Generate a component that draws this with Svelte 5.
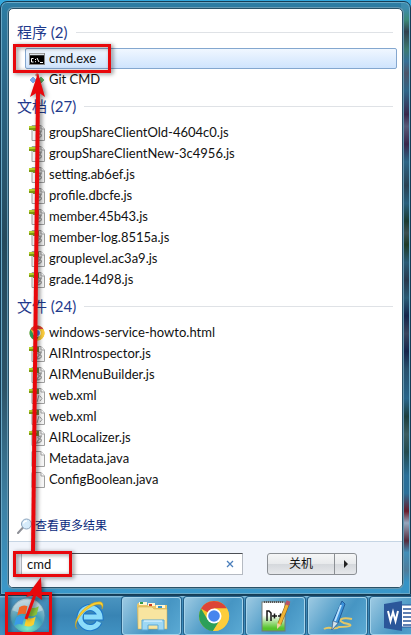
<script>
  const groups = [
    {
      title: '程序',
      count: 2,
      items: [
        { name: 'cmd.exe', icon: 'cmd' },
        { name: 'Git CMD', icon: 'git' },
      ],
    },
    {
      title: '文档',
      count: 27,
      items: [
        { name: 'groupShareClientOld-4604c0.js', icon: 'js' },
        { name: 'groupShareClientNew-3c4956.js', icon: 'js' },
        { name: 'setting.ab6ef.js', icon: 'js' },
        { name: 'profile.dbcfe.js', icon: 'js' },
        { name: 'member.45b43.js', icon: 'js' },
        { name: 'member-log.8515a.js', icon: 'js' },
        { name: 'grouplevel.ac3a9.js', icon: 'js' },
        { name: 'grade.14d98.js', icon: 'js' },
      ],
    },
    {
      title: '文件',
      count: 24,
      items: [
        { name: 'windows-service-howto.html', icon: 'chrome' },
        { name: 'AIRIntrospector.js', icon: 'js' },
        { name: 'AIRMenuBuilder.js', icon: 'js' },
        { name: 'web.xml', icon: 'xml' },
        { name: 'web.xml', icon: 'xml' },
        { name: 'AIRLocalizer.js', icon: 'js' },
        { name: 'Metadata.java', icon: 'file' },
        { name: 'ConfigBoolean.java', icon: 'file' },
      ],
    },
  ]

  const apps = [
    { id: 'explorer', label: 'Windows Explorer' },
    { id: 'chrome', label: 'Google Chrome' },
    { id: 'notepad', label: 'Notepad++' },
    { id: 'pen', label: 'Pen' },
    { id: 'word', label: 'Word' },
  ]

  let query = $state('cmd')
  let selected = $state(groups[0].items[0].name)
</script>

{#snippet chrome()}
  <circle cx="16" cy="16" r="15" fill="#f2c42c" />
  <path d="M16 16 L3 8.500 A15 15 0 0 1 29 8.500 L16 8.500 Z" fill="#dc4437" />
  <path d="M3 8.500 A15 15 0 0 0 15 31 L22 19.500 L9.500 19.500 Z" fill="#2c9f59" />
  <path d="M16 8.500 H29 A15 15 0 0 1 15 31 L22.500 19.800 Z" fill="#fccd3c" />
  <circle cx="16" cy="16" r="7.500" fill="#fff" />
  <circle cx="16" cy="16" r="5.800" fill="#4585ee" />
{/snippet}

{#snippet fileIcon(kind)}
  {#if kind === 'chrome'}
    <svg class="icon" viewBox="0 0 32 32">{@render chrome()}</svg>
  {:else}
    <svg class="icon" viewBox="0 0 16 16">
      {#if kind === 'cmd'}
        <rect x="0.500" y="2.500" width="15" height="11" fill="#000" stroke="#888" />
        <path d="M1 3.500 H15" stroke="#dce3e8" stroke-width="1.500" />
        <path d="M4.500 7.500 H2.500 V11 H4.500 M6.500 8 V9 M6.500 10.200 V11.200 M8 7 L10 11 M11 11.500 H14" fill="none" stroke="#fff" />
      {:else if kind === 'git'}
        <path d="M4 5 L7 8 L4 11 L1 8 Z" fill="#79a9ea" stroke="#79a9ea" stroke-linejoin="round" />
        <path d="M12 5 L15 8 L12 11 L9 8 Z" fill="#66bb6c" stroke="#66bb6c" stroke-linejoin="round" />
        <path d="M8 1 L10 3 L8 5 L6 3 Z" fill="#e8776b" />
        <path d="M8 11 L10 13 L8 15 L6 13 Z" fill="#efcf59" />
      {:else}
        <path d="M3 0.500 H12 L15.500 4 V15.500 H3 Z" fill="#f6f6f6" stroke="#a0a0a0" />
        <path d="M12 0.500 V4 H15.500" fill="#fff" stroke="#a0a0a0" />
        {#if kind === 'js'}
          <path d="M13 6 C8 6 8 8 11 9 C14 10 12 13 7 13 M12 7 L8 12" fill="none" stroke="#a2a2a2" stroke-width="1.300" />
        {:else if kind === 'xml'}
          <path d="M7 8 L5 10.500 L7 13 M11 8 L13 10.500 L11 13 M10 7 L8 14" fill="none" stroke="#999" />
        {/if}
        {#if kind !== 'file'}
          <rect x="4" y="1" width="6" height="5" fill="#7b8a44" />
          <rect x="0" y="1" width="8" height="4" fill="#7d9c12" />
          <rect x="0" y="1" width="8" height="2" fill="#b3cf2c" />
        {/if}
      {/if}
    </svg>
  {/if}
{/snippet}

<div class="desktop">
  <main class="menu">
    <div class="panel">
      <div class="results">
        {#each groups as group}
          <section>
            <h2>{group.title} ({group.count})</h2>
            <ul>
              {#each group.items as item}
                <li>
                  <button class="item" class:selected={item.name === selected} onclick={() => (selected = item.name)}>
                    {@render fileIcon(item.icon)}
                    <span>{item.name}</span>
                  </button>
                </li>
              {/each}
            </ul>
          </section>
        {/each}
        <a class="more" href="#more">
          <svg class="icon" viewBox="0 0 16 16">
            <path d="M1 15 L6 9.500" stroke="#8d8f96" stroke-width="2" stroke-linecap="round" />
            <circle cx="9.500" cy="6" r="5" fill="#d6ebfa" stroke="#8ba4bd" />
            <path d="M6.500 5.500 A3 3 0 0 1 10 3" fill="none" stroke="#fff" stroke-width="1.500" />
          </svg>
          查看更多结果
        </a>
      </div>

      <footer>
        <div class="search">
          <input aria-label="搜索程序和文件" bind:value={query} autocomplete="off" />
          <button class="clear" aria-label="清除" onclick={() => (query = '')}>
            <svg viewBox="0 0 8 8"><path d="M1 1 L7 7 M7 1 L1 7" stroke="#4a7ebb" stroke-width="1.300" /></svg>
          </button>
        </div>
        <div class="power">
          <button class="shutdown">关机</button>
          <button class="options" aria-label="关机选项">
            <svg viewBox="0 0 4 8"><path d="M0 0 L4 4 L0 8 Z" fill="#222" /></svg>
          </button>
        </div>
      </footer>
    </div>
  </main>

  <nav class="taskbar">
    <button class="start" aria-label="开始">
      <svg viewBox="0 0 36 36">
        <defs>
          <radialGradient id="orb" cx="0.500" cy="0.900" r="0.900">
            <stop offset="0" stop-color="#7df0c8" />
            <stop offset="0.500" stop-color="#3f9db8" />
            <stop offset="1" stop-color="#b6c9d2" />
          </radialGradient>
        </defs>
        <circle cx="18" cy="18" r="17" fill="url(#orb)" stroke="#4c8bad" />
        <path d="M3 13 A16 16 0 0 1 33 13 Q18 20 3 13 Z" fill="#fff" opacity="0.350" />
        <path d="M10 10 Q14 7 18 9 L16 17 Q12 15 8 18 Z" fill="#ef6628" />
        <path d="M20 10 Q24 12 29 9 L27 17 Q23 20 18 18 Z" fill="#8cc63e" />
        <path d="M7 20 Q11 17 15 19 L13 27 Q9 25 5 28 Z" fill="#3a9be8" />
        <path d="M17 20 Q22 22 26 19 L24 27 Q20 30 15 28 Z" fill="#fbd02e" />
      </svg>
    </button>
    <button class="ie" aria-label="Internet Explorer">
      <svg viewBox="0 0 32 32">
        <path d="M26 22 A10 10 0 1 1 27 17 H11" fill="none" stroke="#1c77c8" stroke-width="7" />
        <path d="M26 22 A10 10 0 1 1 27 17 H11" fill="none" stroke="#8bdcfa" stroke-width="5" />
        <path d="M4 29 C-3 21 15 0 28 2 C31 3 30 7 29 9 C30 3 24 3 16 8 C7 14 0 25 4 29 Z" fill="#f9cf32" stroke="#c99a18" stroke-width="0.500" />
      </svg>
    </button>
    {#each apps as app}
      <button class="app" aria-label={app.label}>
        <svg viewBox="0 0 32 32">
          {#if app.id === 'explorer'}
            <path d="M1 5 L2 3 H10 L11 5 H31 V29 H2 Z" fill="#e9c567" />
            <path d="M3 2 H11 V5 H3 Z M12 3 H19 V6 H12 Z M20 5 H29 V8 H20 Z" fill="#fff6d5" />
            <path d="M4 2 H7 V4 H4 Z" fill="#349b45" />
            <path d="M13 4 H16 V6 H13 Z" fill="#cd3c27" />
            <path d="M22 6 H26 V8 H22 Z" fill="#3296cd" />
            <path d="M2 7 H16 L18 9 H31 V29 H2 Z" fill="#f8e5a0" stroke="#cda84e" stroke-width="0.500" />
            <path d="M6 30 V20 H28 V30 H22 V25 H12 V30 Z" fill="#9ed8f4" stroke="#5aa8d6" />
            <path d="M8 21 H26" stroke="#eefaff" />
          {:else if app.id === 'chrome'}
            {@render chrome()}
          {:else if app.id === 'notepad'}
            <defs>
              <linearGradient id="page" x1="0" y1="0" x2="0" y2="1">
                <stop offset="0.450" stop-color="#fff" />
                <stop offset="0.900" stop-color="#56c32c" />
              </linearGradient>
            </defs>
            <rect x="2" y="2" width="23" height="29" fill="url(#page)" stroke="#747b74" />
            <path d="M4 2 H24" stroke="#555" stroke-width="2" stroke-dasharray="1 1" />
            <path d="M7 21 V11 H9 L11 13 V21 M12 16 H17 M14.500 13.500 V18.500 M18 16 H23 M20.500 13.500 V18.500" fill="none" stroke="#171717" stroke-width="1.500" />
            <path d="M28 3 L19 25" stroke="#8b6218" stroke-width="4" />
            <path d="M28 3 L19 25" stroke="#f1b434" stroke-width="3" />
            <path d="M17 23 L21 25 L17 29 Z" fill="#ecd1a2" />
            <path d="M28.500 1 L27 5" stroke="#bc5364" stroke-width="4" />
          {:else if app.id === 'pen'}
            <path d="M2 29 C8 25 11 31 17 27 C29 27 33 25 22 23 C14 20 20 17 30 19" fill="none" stroke="#e4c766" stroke-width="2" />
            <path d="M20 1 L23 4 L16 23 L10 30 L11 21 Z" fill="#3b91d9" stroke="#225b99" />
            <path d="M19 5 L13 21" stroke="#bce3ff" stroke-width="2" />
            <path d="M11 21 L16 23 L10 30 Z" fill="#d3e3ee" stroke="#536779" stroke-width="0.500" />
          {:else}
            <path d="M17 5 H31 V27 H17 Z" fill="#fff" stroke="#2b579a" />
            <path d="M19 9 H29 M19 13 H29 M19 17 H29 M19 21 H29 M19 25 H29" stroke="#2b579a" stroke-width="1.500" />
            <path d="M0 4 L18 1 V31 L0 28 Z" fill="#2b579a" />
            <path d="M4 11 L6.500 21 L9 12 L11.500 21 L14 11" fill="none" stroke="#fff" stroke-width="2" />
          {/if}
        </svg>
      </button>
    {/each}
  </nav>

  <svg class="marks" width="120" height="635" viewBox="0 0 120 635">
    <g class="shadow">
      <path d="M33 553 L38 92" stroke-width="4" />
      <path d="M38 73 L45 97 L38 92 L30 97 Z" class="head" />
      <path d="M26 619 L36 592" stroke-width="3" />
      <path d="M41 577 L42 600 L35 595 L26 597 Z" class="head" />
      <rect x="14.500" y="45.500" width="95" height="26" />
      <rect x="14.500" y="552.500" width="56" height="23" />
      <rect x="6.500" y="593.500" width="44" height="40" />
    </g>
  </svg>
</div>

<style>
  :global(body) {
    margin: 0;
  }
  .desktop {
    position: relative;
    box-sizing: border-box;
    min-height: 100vh;
    padding-top: 1px;
    display: flex;
    flex-direction: column;
    overflow: hidden;
    background: #35a8dd;
    font-family: Lato, "Noto Sans CJK SC", sans-serif;
    font-size: 13px;
    color: #111;
  }
  button {
    font: inherit;
    color: inherit;
    padding: 0;
    border: 0;
    background: none;
  }
  svg {
    display: block;
  }

  .menu {
    flex: 1;
    display: flex;
    padding: 6px 7px;
    border: 1px solid #153c55;
    border-radius: 7px 7px 0 0;
    box-shadow: inset 0 0 0 1px #6aa9c7;
    background:
      linear-gradient(#3d8cae 1%, #3c8a78 3%, #31404e 5%, #3c7a70 8%, #356f95 10%, #4d5568 12%, #2f6688 15%, #38274a 19%, #565a78 21%, #38274a 24%, #2c6585 27%, #2a4152 31%, #285f7c 34%, #1b3a30 37%, #3b4e50 39%, #1d3a26 41%, #285a74 44%, #27384c 47%, #285a74 50%, #14244a 53%, #38445c 56%, #14244a 59%, #27506c 62%, #28658a 67%, #1b3d3c 70%, #3b5c60 73%, #234a4e 76%, #2a6f98 80%, #2a6f98 83%, #661a28 86%, #94a8bf 88%, #552a3a 91%, #408fb9 93%, #4f7c9a 96%, #3794c6 98%) right / 9px 100% no-repeat,
      linear-gradient(#2d7da4, #2b6585 15%, #254a5d 40%, #2d5367 65%, #3d81a4 85%, #3a99cb);
  }
  .panel {
    flex: 1;
    display: flex;
    flex-direction: column;
    min-width: 0;
    border: 1px solid #2a5268;
    border-radius: 5px;
    box-shadow: 0 0 0 1px #6699b3;
    background: #fff;
    overflow: hidden;
  }
  .results {
    flex: 1;
    display: flex;
    flex-direction: column;
    padding: 7px 5px 5px 8px;
  }
  h2 {
    margin: 0;
    display: flex;
    align-items: center;
    gap: 8px;
    height: 32px;
    padding-right: 4px;
    font-size: 15px;
    line-height: 32px;
    font-weight: 400;
    color: #1f3a8c;
  }
  h2::after {
    content: "";
    flex: 1;
    height: 1px;
    background: #dfe2e6;
  }
  ul {
    margin: 0;
    padding: 0 0 0 8px;
    list-style: none;
  }
  .item {
    box-sizing: border-box;
    display: flex;
    align-items: center;
    gap: 4px;
    width: 100%;
    height: 21px;
    padding: 0 3px;
    border: 1px solid transparent;
    border-radius: 2px;
    line-height: 19px;
    text-align: left;
  }
  .item.selected {
    border-color: #84a7cf;
    background: linear-gradient(#f0f7ff, #cfe4fd);
  }
  .icon {
    flex: none;
    width: 16px;
    height: 16px;
  }
  .more {
    display: flex;
    align-items: center;
    gap: 2px;
    margin-top: auto;
    line-height: 20px;
    font-size: 12px;
    color: #0b2a7d;
    text-decoration: none;
  }

  footer {
    display: flex;
    align-items: center;
    gap: 24px;
    box-sizing: border-box;
    height: 46px;
    padding: 0 45px 2px 12px;
    border-top: 1px solid #c6d5e4;
    background: #f0f4fb;
  }
  .search {
    flex: 1;
    box-sizing: border-box;
    min-width: 0;
    height: 22px;
    display: flex;
    align-items: center;
    border: 1px solid #b5bac2;
    border-top-color: #4c4f54;
    background: #fff;
  }
  input {
    flex: 1;
    min-width: 0;
    height: 20px;
    box-sizing: border-box;
    padding: 0 0 0 5px;
    border: 0;
    outline: 0;
    background: none;
    font: inherit;
    color: inherit;
  }
  .clear {
    padding: 0 8px;
  }
  .clear svg {
    width: 8px;
    height: 8px;
  }
  .power {
    display: flex;
    box-sizing: border-box;
    height: 22px;
    border: 1px solid #8b8f94;
    border-radius: 3px;
    background: linear-gradient(#f5f6f7, #e8eaec 48%, #d5d8dc 52%, #e6e8eb);
  }
  .shutdown {
    width: 66px;
    font-size: 12px;
    line-height: 20px;
  }
  .options {
    display: grid;
    place-items: center;
    width: 22px;
    border-left: 1px solid #8b8f94;
  }
  .options svg {
    width: 4px;
    height: 8px;
  }

  .taskbar {
    display: flex;
    align-items: center;
    gap: 3px;
    box-sizing: border-box;
    height: 40px;
    padding-left: 9px;
    border-top: 1px solid #17425f;
    background: linear-gradient(#8fc4e0, #4993bf 6%, #3884b4 50%, #4192c2);
  }
  .taskbar button {
    flex: none;
  }
  .start {
    width: 37px;
  }
  .start svg {
    width: 37px;
    height: 37px;
  }
  .ie {
    width: 70px;
    padding-left: 24px;
    box-sizing: border-box;
  }
  .ie svg {
    width: 32px;
    height: 32px;
  }
  .app {
    display: grid;
    place-items: center;
    box-sizing: border-box;
    width: 59px;
    height: 38px;
    border: 1px solid #a5d3ea;
    border-radius: 3px;
    box-shadow: 0 0 0 1px #245f87;
    background: linear-gradient(125deg, #9cc9e2, #5da4cc 40%, #4695c3 60%, #5baad4);
  }
  .app svg {
    width: 32px;
    height: 32px;
  }

  .marks {
    position: absolute;
    top: 0;
    left: 0;
    pointer-events: none;
  }
  .shadow {
    fill: none;
    stroke: #e8080c;
    stroke-width: 3px;
    filter: drop-shadow(2px 1px 2px rgba(0, 0, 0, 0.5));
  }
  .head {
    fill: #e8080c;
    stroke: none;
  }
</style>
